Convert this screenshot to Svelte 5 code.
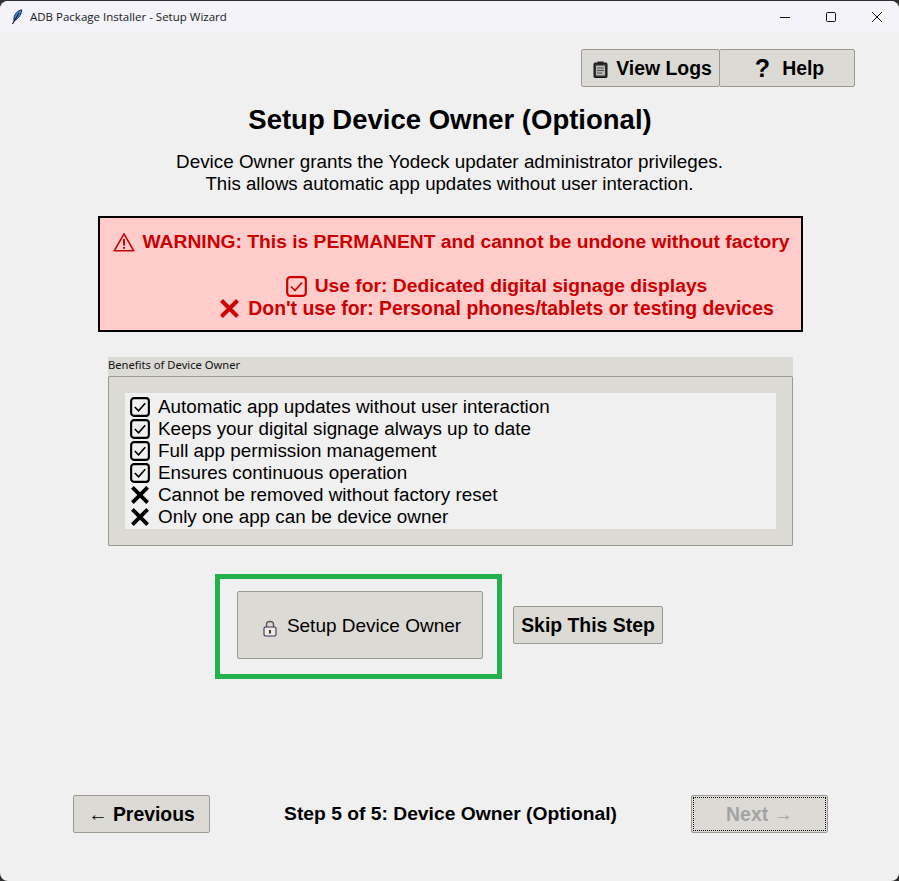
<script>
  const benefits = [
    { ok: true, text: 'Automatic app updates without user interaction' },
    { ok: true, text: 'Keeps your digital signage always up to date' },
    { ok: true, text: 'Full app permission management' },
    { ok: true, text: 'Ensures continuous operation' },
    { ok: false, text: 'Cannot be removed without factory reset' },
    { ok: false, text: 'Only one app can be device owner' }
  ];
</script>

{#snippet check(cls)}
  <svg class={cls} viewBox="0 0 21 21" fill="none" stroke="currentColor" aria-hidden="true">
    <rect x="1.2" y="1.2" width="18.6" height="18.6" rx="3" stroke-width="2.2" />
    <path d="M5 10.5 L9 14.5 L16 6.5" stroke-width="1.7" />
  </svg>
{/snippet}

{#snippet cross(cls)}
  <svg class={cls} viewBox="0 0 21 21" fill="none" stroke="currentColor" aria-hidden="true">
    <path d="M2.5 2.5 L18.5 18.5 M18.5 2.5 L2.5 18.5" stroke-width="4" />
  </svg>
{/snippet}

<div class="window">
  <header class="titlebar">
    <svg class="feather" viewBox="0 0 12 16" aria-hidden="true">
      <path d="M10.8 0.8 C7 1.5 3.5 4.5 3 9 L2.8 11.5 L5.5 10.5 C8.5 8.5 10.5 4.5 10.8 0.8 Z" fill="#3f8ae0" stroke="#10233f" stroke-width="0.9" />
      <path d="M8 4 L1.5 15" stroke="#111" stroke-width="1.1" fill="none" />
    </svg>
    <span class="wintitle">ADB Package Installer - Setup Wizard</span>
    <div class="controls">
      <svg viewBox="0 0 46 32" aria-hidden="true"><path d="M18 16.5 H28" stroke="#111" stroke-width="1" /></svg>
      <svg viewBox="0 0 46 32" aria-hidden="true"><rect x="18.5" y="11.5" width="9" height="9" rx="1.2" fill="none" stroke="#111" stroke-width="1" /></svg>
      <svg viewBox="0 0 46 32" aria-hidden="true"><path d="M18 11 L28 21 M28 11 L18 21" stroke="#111" stroke-width="1" /></svg>
    </div>
  </header>

  <main class="content">
    <div class="topbar">
      <button class="btn logs">
        <svg class="clip" viewBox="0 0 15 17" aria-hidden="true">
          <rect x="1" y="2" width="13" height="14.5" rx="1" fill="#333" stroke="#111" />
          <rect x="3" y="4.5" width="9" height="10" fill="#b5b5ae" />
          <path d="M4 7 H11 M4 9.5 H11 M4 12 H9" stroke="#555" stroke-width="1" />
          <rect x="4.5" y="0.5" width="6" height="3" fill="#222" />
        </svg>
        View Logs
      </button>
      <button class="btn help"><span class="qmark">?</span>Help</button>
    </div>

    <h1>Setup Device Owner (Optional)</h1>
    <p class="intro">
      Device Owner grants the Yodeck updater administrator privileges.<br />
      <span class="tight">This allows automatic app updates without user interaction.</span>
    </p>

    <section class="warning">
      <div class="wline first">
        <svg class="tri" viewBox="0 0 22 20" fill="none" stroke="currentColor" aria-hidden="true">
          <path d="M11 1.8 L20.8 18.8 H1.2 Z" stroke-width="1.6" stroke-linejoin="round" />
          <path d="M11 7 V13.5 M11 15 V16.8" stroke-width="2" />
        </svg>WARNING: This is PERMANENT and cannot be undone without factory</div>
      <div class="wline blank"></div>
      <div class="wline shifted">{@render check('ico')}Use for: Dedicated digital signage displays</div>
      <div class="wline shifted long">{@render cross('ico')}Don't use for: Personal phones/tablets or testing devices</div>
    </section>

    <section class="benefits">
      <div class="legend">Benefits of Device Owner</div>
      <div class="panel">
        <ul>
          {#each benefits as b}
            <li>{#if b.ok}{@render check('ico')}{:else}{@render cross('ico')}{/if}{b.text}</li>
          {/each}
        </ul>
      </div>
    </section>

    <div class="actions">
      <div class="highlight">
        <button class="btn primary">
          <svg class="lock" viewBox="0 0 14 17" fill="none" aria-hidden="true">
            <path d="M3.5 7.5 V4.5 C3.5 0.5 10.5 0.5 10.5 4.5 V7.5" stroke="#555" stroke-width="1.4" />
            <rect x="1" y="7" width="12" height="9" rx="1.5" stroke="#3c2a5c" stroke-width="1.1" fill="#efe9e0" />
            <path d="M7 10 V13.5" stroke="#111" stroke-width="1.6" />
          </svg>
          Setup Device Owner
        </button>
      </div>
      <button class="btn skip">Skip This Step</button>
    </div>

    <footer class="nav">
      <button class="btn navbtn">← Previous</button>
      <span class="step">Step 5 of 5: Device Owner (Optional)</span>
      <button class="btn navbtn next" disabled><span class="focus">Next →</span></button>
    </footer>
  </main>
</div>

<style>
  :global(body) {
    background: #2e2e2e;
  }

  .window {
    height: 880px;
    margin-top: 1px;
    display: flex;
    flex-direction: column;
    background: #f0f0f0;
    border-radius: 8px;
    overflow: hidden;
    font-family: "Liberation Sans", Arial, sans-serif;
    color: #000;
  }

  .titlebar {
    height: 31px;
    flex: none;
    display: flex;
    align-items: center;
    background: #f3f3f9;
    padding-left: 11px;
  }

  .feather {
    width: 12px;
    height: 16px;
    margin-right: 7px;
  }

  .wintitle {
    font-family: "Open Sans", "Noto Sans", sans-serif;
    font-size: 11.5px;
    color: #1a1a1a;
  }

  .controls {
    margin-left: auto;
    margin-right: -1px;
    display: flex;
  }

  .controls svg {
    width: 46px;
    height: 32px;
    display: block;
  }

  .content {
    flex: 1;
    display: flex;
    flex-direction: column;
    padding-bottom: 48px;
  }

  .btn {
    box-sizing: border-box;
    font-family: inherit;
    color: #000;
    background: #dcdad5;
    border: 1px solid #9e9a91;
    border-radius: 2px;
    padding: 0;
    display: flex;
    align-items: center;
    justify-content: center;
  }

  .topbar {
    display: flex;
    justify-content: flex-end;
    padding: 17px 44px 0 0;
  }

  .topbar .btn {
    height: 38px;
    font-size: 19.4px;
    font-weight: 700;
  }

  .topbar .logs {
    width: 139px;
    gap: 8px;
    padding-left: 4px;
  }

  .topbar .help {
    width: 136px;
    margin-left: -1px;
    padding-left: 5px;
  }

  .qmark {
    font-size: 25px;
    font-weight: 700;
    margin-right: 12px;
  }

  .clip {
    width: 15px;
    height: 17px;
    margin-top: 3px;
  }

  h1 {
    margin: 17px 0 0;
    padding-left: 1px;
    font-size: 27.5px;
    line-height: 32px;
    font-weight: 700;
    text-align: center;
  }

  .intro {
    margin: 15px 0 0;
    font-size: 18.85px;
    line-height: 22px;
    text-align: center;
  }

  .tight {
    font-size: 18.65px;
  }

  .warning {
    box-sizing: border-box;
    width: 705px;
    height: 116px;
    margin: 21px 0 0 98px;
    padding-top: 13px;
    background: #ffcccc;
    border: 2px solid #000;
    color: #cc0000;
    font-size: 19.25px;
    font-weight: 700;
  }

  .wline {
    height: 22px;
    line-height: 22px;
    display: flex;
    align-items: center;
    justify-content: center;
    white-space: pre;
  }

  .first {
    padding-left: 2px;
  }

  .shifted {
    padding-left: 92px;
  }

  .long {
    font-size: 19.42px;
  }

  .tri {
    width: 22px;
    height: 20px;
    margin-right: 7px;
  }

  .ico {
    width: 21px;
    height: 21px;
    flex: none;
    margin-right: 8px;
  }

  .benefits {
    width: 685px;
    margin: 25px 0 0 108px;
  }

  .legend {
    height: 19px;
    line-height: 16px;
    background: #dcdad5;
    font-family: "Noto Sans", sans-serif;
    font-size: 11.2px;
    color: #111;
  }

  .panel {
    box-sizing: border-box;
    height: 170px;
    padding: 16px;
    background: #dcdad5;
    border: 1px solid #9e9a91;
    border-radius: 1px;
  }

  ul {
    list-style: none;
    margin: 0;
    padding: 3px 0 3px 5px;
    height: 136px;
    box-sizing: border-box;
    background: #f0f0f0;
  }

  li {
    height: 22px;
    display: flex;
    align-items: center;
    font-size: 18.85px;
    line-height: 22px;
    white-space: pre;
  }

  li .ico {
    width: 20px;
    height: 20px;
  }

  .actions {
    display: flex;
    align-items: flex-start;
    gap: 11px;
    margin: 28px 0 0 215px;
  }

  .highlight {
    box-sizing: border-box;
    width: 287px;
    height: 105px;
    padding: 12px 14px 0 17px;
    border: 5px solid #22b14c;
  }

  .primary {
    width: 246px;
    height: 68px;
    padding: 2px 0 0 4px;
    font-size: 19px;
    gap: 10px;
  }

  .lock {
    width: 14px;
    height: 17px;
    margin-top: 4px;
  }

  .skip {
    width: 150px;
    height: 38px;
    margin-top: 32px;
    font-size: 19.4px;
    font-weight: 700;
  }

  .nav {
    margin-top: auto;
    display: flex;
    align-items: center;
    justify-content: space-between;
    padding: 0 71px 0 73px;
  }

  .navbtn {
    width: 137px;
    height: 38px;
    font-size: 19.4px;
    font-weight: 700;
  }

  .step {
    font-size: 19.27px;
    font-weight: 700;
  }

  .next {
    color: #a3a3a3;
    padding: 1px;
  }

  .focus {
    flex: 1;
    align-self: stretch;
    display: flex;
    align-items: center;
    justify-content: center;
    border: 1px dotted #000;
  }
</style>
